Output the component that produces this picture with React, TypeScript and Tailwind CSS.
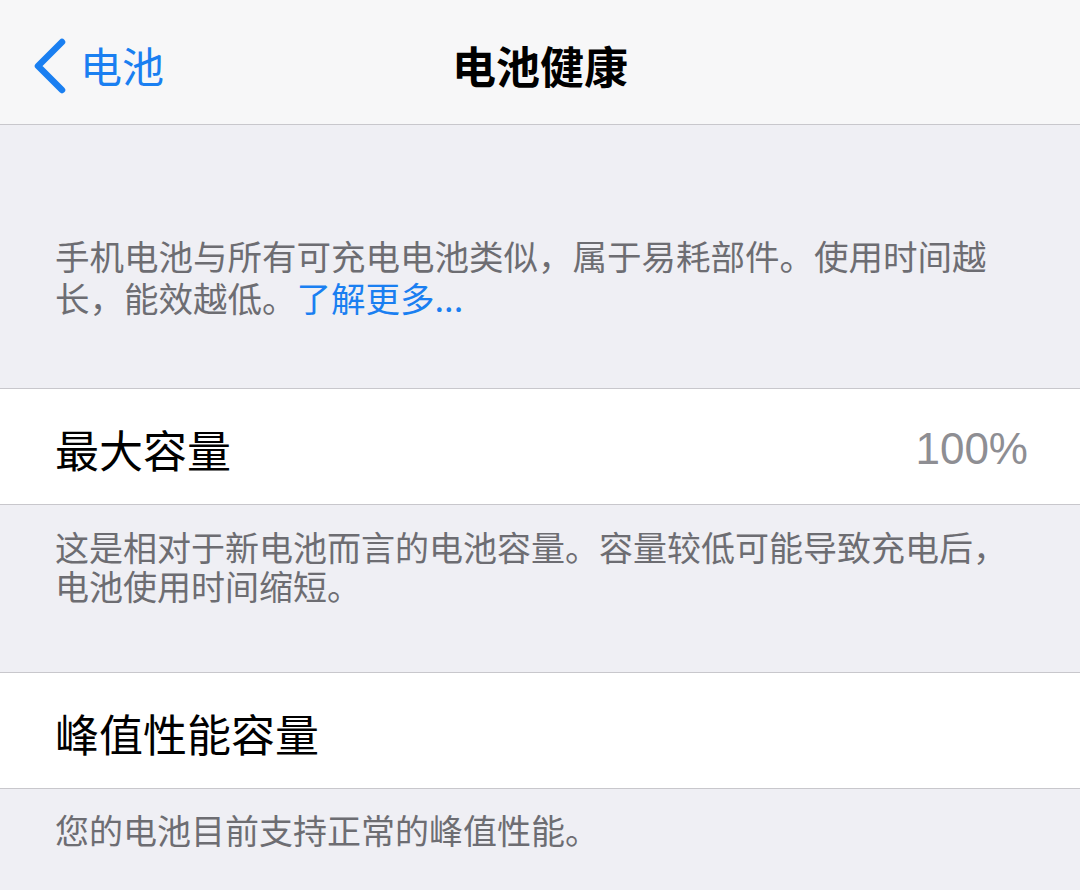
import React from "react";

export default function App() {
  return (
    <div className="w-[1080px] h-[890px] overflow-hidden bg-[#efeff4] font-['Noto_Sans_CJK_SC',sans-serif]">
      {/* Nav bar */}
      <div className="relative h-[125px] bg-[#f7f7f8] border-b border-[#c8c7cc] flex items-center pt-[6px]">
        <div className="flex items-center pl-[33px]">
          <svg width="36" height="56" viewBox="0 0 36 56" className="mt-[2px]">
            <polyline points="29,4 5,28 29,52" fill="none" stroke="#1a7ff1" strokeWidth="6.5" strokeLinecap="round" strokeLinejoin="round" />
          </svg>
          <span className="ml-[11px] text-[42px] leading-none text-[#1a7ff1]">电池</span>
        </div>
        <div className="absolute inset-0 pt-[6px] flex items-center justify-center pointer-events-none">
          <span className="text-[44px] leading-none font-bold text-black">电池健康</span>
        </div>
      </div>

      {/* Intro */}
      <div className="pt-[109px] pb-[70px] px-[55px] text-[34.5px] leading-[42px] text-[#6d6d72]">
        手机电池与所有可充电电池类似，属于易耗部件。使用时间越长，能效越低。<span className="text-[#1a7ff1]">了解更多...</span>
      </div>

      {/* Max capacity */}
      <div className="h-[117px] bg-white border-y border-[#c8c7cc] flex items-center justify-between pl-[55px] pr-[52px] pt-[4px]">
        <span className="text-[44px] leading-none text-black">最大容量</span>
        <span className="text-[44px] leading-none text-[#8e8e93] font-['Liberation_Sans',sans-serif]">100%</span>
      </div>

      <div className="pt-[22px] pb-[67px] px-[55px] text-[34px] leading-[39px] text-[#6d6d72]">
        这是相对于新电池而言的电池容量。容量较低可能导致充电后，电池使用时间缩短。
      </div>

      {/* Peak performance */}
      <div className="h-[117px] bg-white border-y border-[#c8c7cc] flex items-center pl-[55px] pt-[4px]">
        <span className="text-[44px] leading-none text-black">峰值性能容量</span>
      </div>

      <div className="pt-[21px] px-[55px] text-[34px] leading-[40px] text-[#6d6d72]">
        您的电池目前支持正常的峰值性能。
      </div>
    </div>
  );
}
